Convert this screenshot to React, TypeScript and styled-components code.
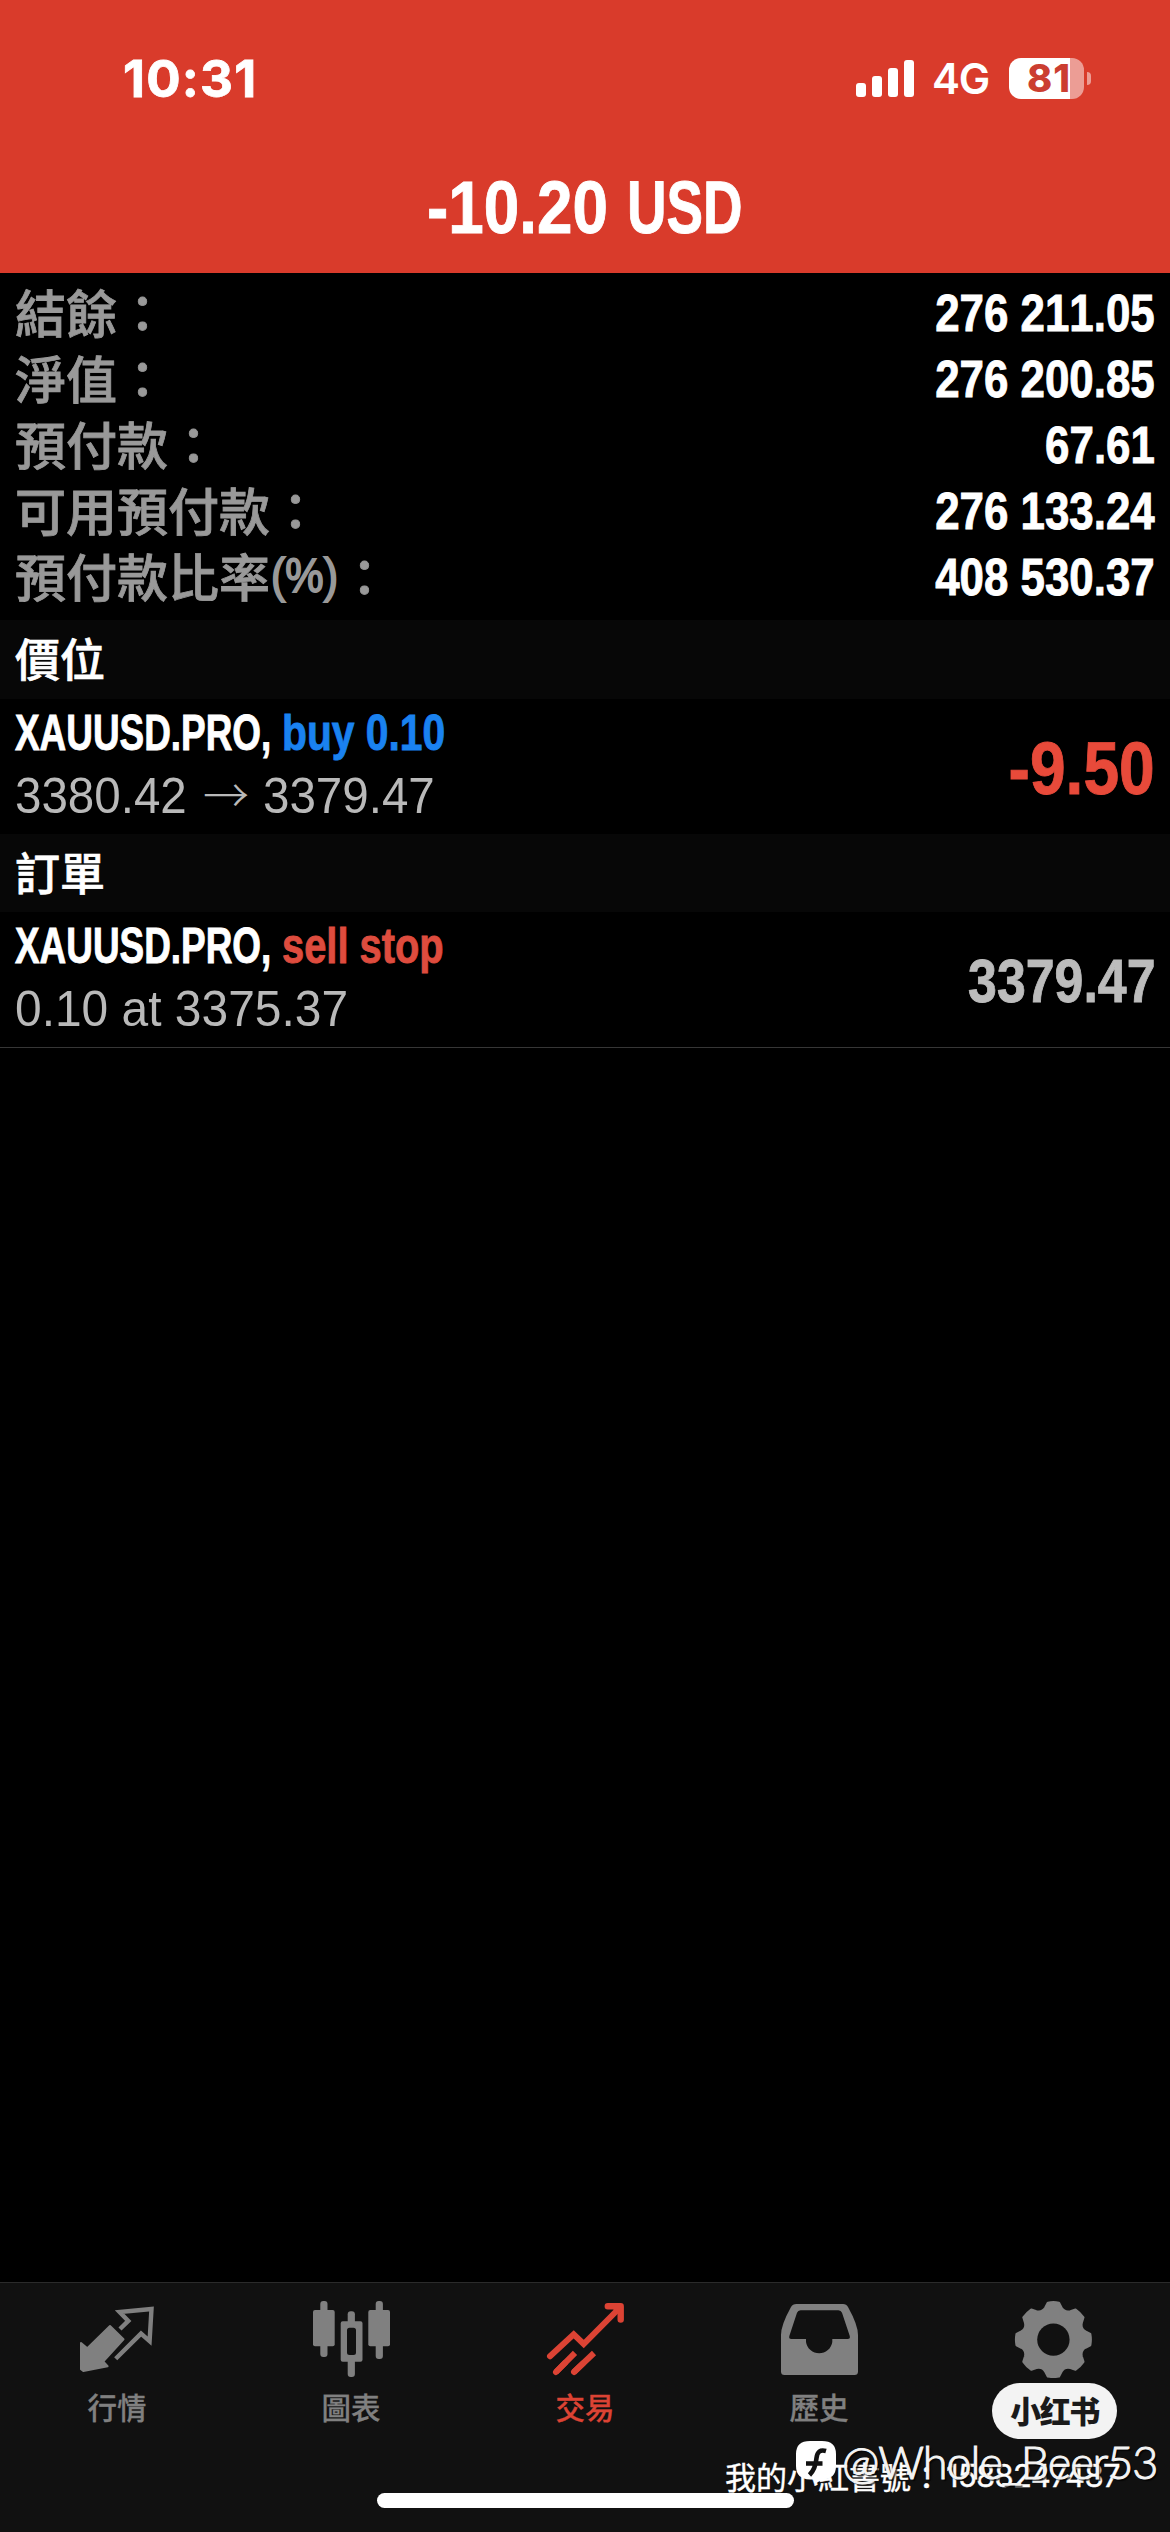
import React from "react";
import styled, { createGlobalStyle } from "styled-components";

const GlobalStyle = createGlobalStyle`
  * { box-sizing: border-box; }
  body { margin: 0; background: #000; }
`;

const grotesk = `"Liberation Sans", "Noto Sans CJK TC", sans-serif`;
const cjk = `"Noto Sans CJK TC", "Noto Sans CJK SC", sans-serif`;
const system = `Inter, "Liberation Sans", sans-serif`;

const Screen = styled.main`
  position: relative;
  display: flex;
  flex-direction: column;
  width: 1170px;
  height: 2532px;
  overflow: hidden;
  background: #000;
  color: #fff;
  font-family: ${grotesk};
  white-space: nowrap;
`;

const Header = styled.header`
  height: 273px;
  background: #d93b2b;
`;

const StatusBar = styled.div`
  display: flex;
  align-items: center;
  height: 156px;
  padding: 0 79px 0 123px;
  font-family: ${system};
`;

const Clock = styled.time`
  flex: 1;
  font-size: 51px;
  font-weight: 700;
  letter-spacing: 1.2px;
  -webkit-text-stroke: 0.8px #fff;
`;

const SignalBars = styled.div`
  display: flex;
  align-items: flex-end;
  gap: 6px;
  height: 37px;
`;

const SignalBar = styled.i<{ $h: number }>`
  width: 10px;
  height: ${(p) => p.$h}px;
  border-radius: 3px;
  background: #fff;
`;

const Network = styled.span`
  width: 58px;
  margin: 0 19px 0 18px;
  font-size: 42px;
  font-weight: 600;
  letter-spacing: -1.2px;
`;

const Battery = styled.div`
  display: flex;
  align-items: center;
  gap: 3px;
`;

const BatteryBody = styled.div`
  display: flex;
  align-items: center;
  justify-content: flex-end;
  width: 75px;
  height: 41px;
  padding-right: 13px;
  border-radius: 12px;
  background: linear-gradient(to right, #fff 61px, #ec9d95 61px);
  color: #cb3e31;
  font-size: 38px;
  font-weight: 800;
  letter-spacing: 1px;
`;

const BatteryTip = styled.i`
  width: 4px;
  height: 13px;
  border-radius: 0 6px 6px 0;
  background: #ec9d95;
`;

const Title = styled.h1`
  display: flex;
  justify-content: center;
  gap: 20px;
  margin: 0;
  line-height: 104px;
`;

/* Condensed grotesk: regular glyphs squeezed horizontally inside a box of the final width. */
const CondensedBox = styled.span<{ $w: number; $end?: boolean }>`
  display: flex;
  justify-content: ${(p) => (p.$end ? "flex-end" : "flex-start")};
  width: ${(p) => p.$w}px;
`;

const CondensedText = styled.span<{
  $size: number;
  $scale: number;
  $color: string;
  $end?: boolean;
  $light?: boolean;
}>`
  flex: none;
  color: ${(p) => p.$color};
  font-family: ${grotesk};
  font-kerning: none;
  font-size: ${(p) => p.$size}px;
  font-weight: ${(p) => (p.$light ? 400 : 700)};
  ${(p) => (p.$light ? "" : `-webkit-text-stroke: 0.9px ${p.$color};`)}
  transform: scaleX(${(p) => p.$scale});
  transform-origin: ${(p) => (p.$end ? "right" : "left")} center;
`;

type CondensedProps = {
  w: number;
  size: number;
  scale: number;
  color?: string;
  end?: boolean;
  light?: boolean;
  children: React.ReactNode;
};

const Condensed = ({ w, size, scale, color = "#fff", end, light, children }: CondensedProps) => (
  <CondensedBox $w={w} $end={end}>
    <CondensedText $size={size} $scale={scale} $color={color} $end={end} $light={light}>
      {children}
    </CondensedText>
  </CondensedBox>
);

const Summary = styled.section`
  height: 347px;
  padding: 7px 15px 0 15px;
`;

const SummaryRow = styled.div`
  display: flex;
  align-items: center;
  justify-content: space-between;
  height: 66px;
  line-height: 66px;
`;

const SummaryLabel = styled.span`
  display: flex;
  margin-bottom: 5px;
  color: #999;
  font-family: ${cjk};
  font-size: 51px;
  font-weight: 500;
  -webkit-text-stroke: 0.8px #999;
`;

const PercentMark = styled.span`
  display: flex;
  width: 69px;
  padding-left: 1px;
  -webkit-text-stroke: 1.8px #999;
`;

const SectionHeader = styled.h2<{ $h: number }>`
  height: ${(p) => p.$h}px;
  margin: 0;
  padding-left: 15px;
  background: #070707;
  font-family: ${cjk};
  font-size: 45px;
  font-weight: 500;
  line-height: ${(p) => p.$h - 3}px;
  -webkit-text-stroke: 0.7px #fff;
`;

const PositionRow = styled.article<{ $last?: boolean }>`
  display: flex;
  align-items: center;
  justify-content: space-between;
  height: ${(p) => (p.$last ? 136 : 135)}px;
  padding: 0 15px;
  border-bottom: ${(p) => (p.$last ? "1px solid #363636" : "0")};
`;

const PositionInfo = styled.div`
  display: flex;
  flex-direction: column;
  height: 129px;
`;

const InfoLine = styled.div<{ $h: number }>`
  display: flex;
  height: ${(p) => p.$h}px;
  line-height: ${(p) => p.$h}px;
`;

const Arrow = styled.span`
  width: 76px;
  padding-left: 16px;
  color: #b9b9b9;
  font-family: ${cjk};
  font-size: 46px;
  font-weight: 300;
  line-height: 57px;
`;

const PositionValue = styled.div`
  margin-top: 3px;
`;

const Spacer = styled.div`
  flex: 1;
`;

const TabBar = styled.nav`
  display: flex;
  height: 250px;
  border-top: 1px solid #2b2b2b;
  background: #111;
`;

const Tab = styled.a<{ $active?: boolean }>`
  display: flex;
  flex: 1;
  flex-direction: column;
  align-items: center;
  padding-top: 15px;
  color: ${(p) => (p.$active ? "#dc4334" : "#808080")};
  font-family: ${cjk};
  font-size: 29.5px;
  font-weight: 500;
  line-height: 56px;
  -webkit-text-stroke: 0.3px currentColor;
`;

const TabIcon = styled.svg`
  width: 80px;
  height: 80px;
`;

const HomeIndicator = styled.div`
  position: absolute;
  left: 377px;
  bottom: 24px;
  width: 417px;
  height: 15px;
  border-radius: 8px;
  background: #fff;
`;

const Badge = styled.div`
  position: absolute;
  right: 53px;
  bottom: 93px;
  width: 125px;
  height: 56px;
  border-radius: 28px;
  background: #f3f3f3;
  color: #1a1a1a;
  font-family: "Noto Sans CJK SC", sans-serif;
  font-size: 31px;
  font-weight: 900;
  letter-spacing: -1.5px;
  line-height: 53px;
  text-align: center;
`;

const AccountMark = styled.div`
  position: absolute;
  left: 725px;
  bottom: 34px;
  display: flex;
  height: 44px;
  font-family: ${cjk};
  font-size: 31px;
  line-height: 44px;
  -webkit-text-stroke: 0.4px #fff;
`;

const AccountNumber = styled.span`
  margin-left: 4px;
  font-family: Inter, sans-serif;
  font-size: 31px;
  letter-spacing: -0.7px;
`;

const AuthorMark = styled.div`
  position: absolute;
  left: 795px;
  bottom: 41px;
  display: flex;
  align-items: center;
  gap: 5px;
  height: 58px;
  color: #f4f4f4;
  font-family: Lato, sans-serif;
  font-size: 45px;
  font-weight: 300;
  letter-spacing: -1.1px;
  line-height: 58px;
  text-shadow: 2px 2px 1px rgba(0, 0, 0, 0.75);
  -webkit-text-stroke: 1px #f4f4f4;
`;

const AuthorLogo = styled.svg`
  width: 42px;
  height: 44px;
`;

const QuotesIcon = () => (
  <TabIcon viewBox="0 0 80 80" fill="currentColor">
    <path
      d="M33 28 46.5 41.3 26.2 63.5 30.6 68.2 6.3 73 4 71.3V45L10.3 50.3Z"
      stroke="currentColor"
      strokeWidth="2"
      strokeLinejoin="round"
    />
    <path d="M43 31 51.3 22.9 42.6 14.1 74.5 11 72.6 43.2 64 35.6 38.7 60.7" fill="none" stroke="currentColor" strokeWidth="4.4" />
  </TabIcon>
);

const ChartIcon = () => (
  <TabIcon viewBox="0 0 80 80" fill="currentColor">
    <rect x="2" y="12" width="21.7" height="36.3" rx="2" />
    <rect x="9.3" y="3" width="7.2" height="56" rx="3" />
    <rect x="36.7" y="13.3" width="7.2" height="14" rx="3" />
    <rect x="36.7" y="60" width="7.2" height="19" rx="3" />
    <path
      fillRule="evenodd"
      d="M31.7 23.3H49.5a2 2 0 0 1 2 2V61.7a2 2 0 0 1-2 2H31.7a2 2 0 0 1-2-2V25.3a2 2 0 0 1 2-2ZM38.5 29.7a2.5 2.5 0 0 0-2.5 2.5V54.5a2.5 2.5 0 0 0 2.5 2.5h4a2.5 2.5 0 0 0 2.5-2.5V32.2a2.5 2.5 0 0 0-2.5-2.5Z"
    />
    <rect x="57.3" y="12" width="21.7" height="36.3" rx="2" />
    <rect x="64.7" y="3" width="7.2" height="58" rx="3" />
  </TabIcon>
);

const TradeIcon = () => (
  <TabIcon viewBox="0 0 80 80" fill="none" stroke="currentColor" strokeWidth="6">
    <path d="M5 58.3 28.7 36.3 38.7 46 75 9.5" strokeLinecap="round" />
    <path d="M62.8 8.3H75.7V21.6" strokeWidth="6.4" strokeLinecap="round" strokeLinejoin="round" />
    <path d="M66 9H75V18Z" fill="currentColor" stroke="none" />
    <path d="M11 74 30 54.8M29 74 49 55" />
    <path d="M11 74 20 64.9M29 74 38 65.4" strokeLinecap="round" />
  </TabIcon>
);

const HistoryIcon = () => (
  <TabIcon viewBox="0 0 80 80" fill="currentColor">
    <path
      fillRule="evenodd"
      d="M17.5 6H64Q67.5 6 69 9Q79 27 79 37V73.5Q79 77 75.5 77H5.5Q2 77 2 73.5V37Q2 27 12 9Q13.5 6 17.5 6ZM21.5 12.3Q19 12.3 18 14.8L10.5 37.5Q9.3 41 12.5 41H27V44A13.3 13.3 0 0 0 53.3 44V41H68.5Q71.8 41 70.6 37.5L63 14.8Q62 12.3 59.5 12.3Z"
    />
  </TabIcon>
);

const polar = (r: number, deg: number) => {
  const a = (deg * Math.PI) / 180;
  return `${(40.4 + r * Math.sin(a)).toFixed(2)} ${(41.6 - r * Math.cos(a)).toFixed(2)}`;
};

const gearPath =
  [0, 45, 90, 135, 180, 225, 270, 315]
    .map(
      (t, i) =>
        `${i ? "L" : "M"}${polar(33, t - 14)}L${polar(37.2, t - 8.5)}Q${polar(37.8, t)} ${polar(37.2, t + 8.5)}L${polar(33, t + 14)}Q${polar(29, t + 22.5)} ${polar(33, t + 31)}`
    )
    .join("") + "Z";

const SettingsIcon = () => (
  <TabIcon viewBox="0 0 80 80">
    <path d={gearPath} fill="currentColor" stroke="currentColor" strokeWidth="2.4" strokeLinejoin="round" />
    <circle cx="40.4" cy="41.6" r="16.2" fill="#111" />
  </TabIcon>
);

const summary = [
  { label: "結餘", value: "276 211.05" },
  { label: "淨值", value: "276 200.85" },
  { label: "預付款", value: "67.61" },
  { label: "可用預付款", value: "276 133.24" },
  { label: "預付款比率", percent: true, value: "408 530.37" },
];

const tabs = [
  { id: "quotes", label: "行情", Icon: QuotesIcon },
  { id: "chart", label: "圖表", Icon: ChartIcon },
  { id: "trade", label: "交易", Icon: TradeIcon, active: true },
  { id: "history", label: "歷史", Icon: HistoryIcon },
  { id: "settings", Icon: SettingsIcon },
];

export default function App() {
  return (
    <>
      <GlobalStyle />
      <Screen>
        <Header>
          <StatusBar>
            <Clock>10:31</Clock>
            <SignalBars>
              {[14, 21, 29, 37].map((h) => (
                <SignalBar key={h} $h={h} />
              ))}
            </SignalBars>
            <Network>4G</Network>
            <Battery>
              <BatteryBody>81</BatteryBody>
              <BatteryTip />
            </Battery>
          </StatusBar>
          <Title>
            <Condensed w={180} size={74} scale={0.862}>-10.20</Condensed>
            <Condensed w={116} size={74} scale={0.74}>USD</Condensed>
          </Title>
        </Header>

        <Summary>
          {summary.map((row) => (
            <SummaryRow key={row.label}>
              <SummaryLabel>
                {row.label}
                {row.percent && (
                  <PercentMark>
                    <Condensed w={68} size={49} scale={0.88} color="#999" light>
                      (%)
                    </Condensed>
                  </PercentMark>
                )}
                ：
              </SummaryLabel>
              <Condensed w={240} size={51.5} scale={0.852} end>{row.value}</Condensed>
            </SummaryRow>
          ))}
        </Summary>

        <SectionHeader $h={79}>價位</SectionHeader>
        <PositionRow>
          <PositionInfo>
            <InfoLine $h={62}>
              <Condensed w={267} size={50} scale={0.738}>XAUUSD.PRO,</Condensed>
              <Condensed w={170} size={50} scale={0.815} color="#1a82f0">buy 0.10</Condensed>
            </InfoLine>
            <InfoLine $h={64}>
              <Condensed w={172} size={49.5} scale={0.96} color="#b9b9b9" light>3380.42</Condensed>
              <Arrow>→</Arrow>
              <Condensed w={172} size={49.5} scale={0.96} color="#b9b9b9" light>3379.47</Condensed>
            </InfoLine>
          </PositionInfo>
          <PositionValue>
            <Condensed w={160} size={74} scale={0.866} color="#e84a3a" end>-9.50</Condensed>
          </PositionValue>
        </PositionRow>

        <SectionHeader $h={78}>訂單</SectionHeader>
        <PositionRow $last>
          <PositionInfo>
            <InfoLine $h={62}>
              <Condensed w={267} size={50} scale={0.738}>XAUUSD.PRO,</Condensed>
              <Condensed w={170} size={50} scale={0.797} color="#de4c3e">sell stop</Condensed>
            </InfoLine>
            <InfoLine $h={64}>
              <Condensed w={340} size={49.5} scale={0.968} color="#b9b9b9" light>0.10 at 3375.37</Condensed>
            </InfoLine>
          </PositionInfo>
          <PositionValue>
            <Condensed w={200} size={61} scale={0.85} color="#bcbcbc" end>3379.47</Condensed>
          </PositionValue>
        </PositionRow>

        <Spacer />

        <TabBar>
          {tabs.map(({ id, label, Icon, active }) => (
            <Tab key={id} $active={active}>
              <Icon />
              {label}
            </Tab>
          ))}
        </TabBar>

        <HomeIndicator />
        <Badge>小红书</Badge>
        <AccountMark>
          我的小紅書號：
          <AccountNumber>1588247487</AccountNumber>
        </AccountMark>
        <AuthorMark>
          <AuthorLogo viewBox="0 0 42 44">
            <path d="M15 1H27Q41 1 41 14V26Q41 39 27 39.5L20 44 19 39.5H15Q1 39 1 26V14Q1 1 15 1Z" fill="#fff" stroke="none" />
            <path d="M31 11Q22.5 8.5 21.5 18 20.5 29 14.5 35M11 23.5H27.5" fill="none" stroke="#111" strokeWidth="4.6" />
          </AuthorLogo>
          @Whole_Beer53
        </AuthorMark>
      </Screen>
    </>
  );
}
